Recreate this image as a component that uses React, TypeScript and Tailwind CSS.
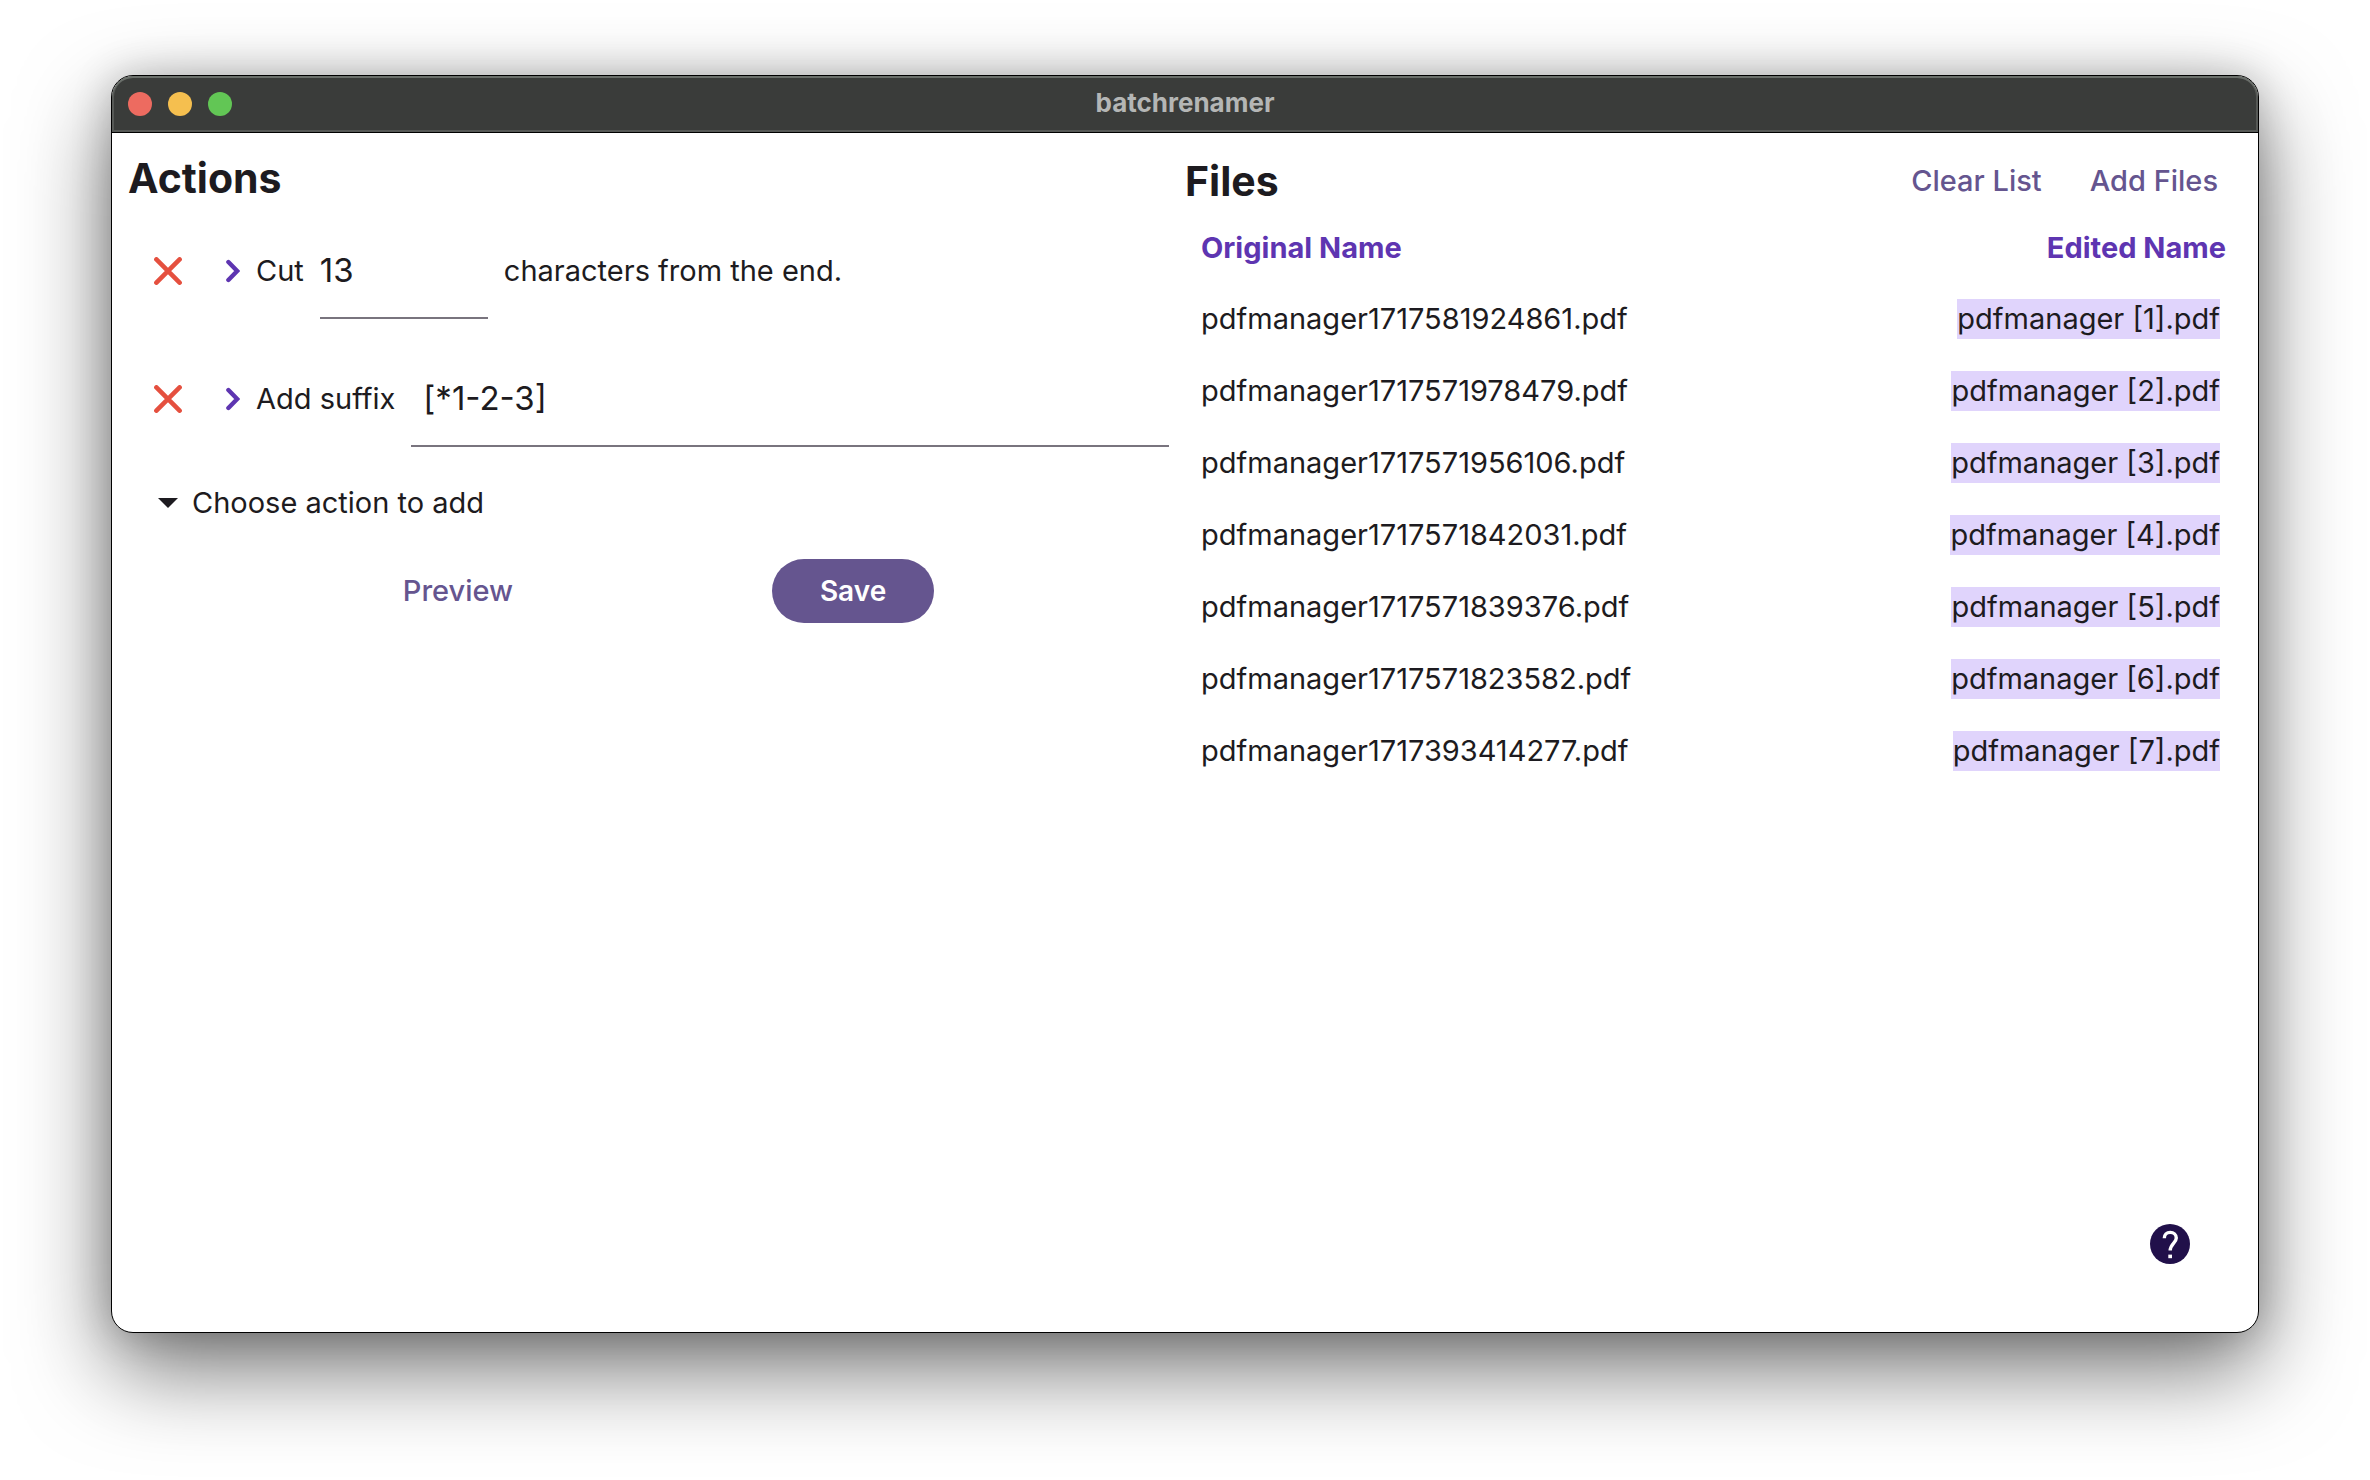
import React from "react";

const files = [
  { original: "pdfmanager1717581924861.pdf", edited: "pdfmanager [1].pdf" },
  { original: "pdfmanager1717571978479.pdf", edited: "pdfmanager [2].pdf" },
  { original: "pdfmanager1717571956106.pdf", edited: "pdfmanager [3].pdf" },
  { original: "pdfmanager1717571842031.pdf", edited: "pdfmanager [4].pdf" },
  { original: "pdfmanager1717571839376.pdf", edited: "pdfmanager [5].pdf" },
  { original: "pdfmanager1717571823582.pdf", edited: "pdfmanager [6].pdf" },
  { original: "pdfmanager1717393414277.pdf", edited: "pdfmanager [7].pdf" },
];

function TitleBar() {
  return (
    <header className="grid h-[57px] grid-cols-[1fr_auto_1fr] items-center rounded-t-[21px] border-b border-black bg-[#3a3c3a] px-4 shadow-[inset_0_2px_0_#6b706b,inset_0_0_0_2px_#565956]">
      <div className="flex gap-4">
        <button aria-label="Close" className="size-6 rounded-full bg-[#ed6b60]" />
        <button aria-label="Minimize" className="size-6 rounded-full bg-[#f5bf4f]" />
        <button aria-label="Zoom" className="size-6 rounded-full bg-[#62c655]" />
      </div>
      <h1 className="pb-0.5 text-[26px] leading-8 font-bold text-[#b4b6b5]">batchrenamer</h1>
    </header>
  );
}

function RemoveButton({ label }: { label: string }) {
  return (
    <button aria-label={label} className="mr-11 shrink-0">
      <svg viewBox="0 0 28 28" className="size-7" fill="none" stroke="#e5503f" strokeWidth="4.6" strokeLinecap="round">
        <path d="M2.4 2.4 25.6 25.6M25.6 2.4 2.4 25.6" />
      </svg>
    </button>
  );
}

function Chevron() {
  return (
    <svg viewBox="0 0 14 24" className="mr-4 h-6 w-[14px] shrink-0" fill="none" stroke="#5e35b1" strokeWidth="4.4" strokeLinecap="round" strokeLinejoin="miter">
      <path d="M2.4 3 11.2 12 2.4 21" />
    </svg>
  );
}

function Actions() {
  return (
    <section className="px-4 pt-5">
      <h2 className="text-[41px] leading-[50px] font-bold">Actions</h2>

      <div className="mt-2 flex flex-col">
        <div className="flex h-32 items-center pt-6 pb-8 pl-[26px]">
          <RemoveButton label="Remove cut action" />
          <Chevron />
          <label htmlFor="cut" className="mr-4 text-[29px]">Cut</label>
          <input
            id="cut"
            defaultValue="13"
            className="h-24 w-[168px] shrink-0 border-b-2 border-[#79747e] bg-transparent text-[33px] outline-none"
          />
          <span className="ml-4 text-[29px] whitespace-nowrap">characters from the end.</span>
        </div>
        <div className="flex h-32 items-center pt-6 pb-8 pl-[26px]">
          <RemoveButton label="Remove suffix action" />
          <Chevron />
          <label htmlFor="suffix" className="mr-4 text-[29px] whitespace-nowrap">Add suffix</label>
          <input
            id="suffix"
            defaultValue="[*1-2-3]"
            className="h-24 min-w-0 flex-1 border-b-2 border-[#79747e] bg-transparent px-3 text-[33px] outline-none"
          />
        </div>
      </div>

      <div className="mt-1 flex h-16 items-center gap-3.5 pl-[30px]">
        <svg viewBox="0 0 20 10" className="h-[10px] w-5 shrink-0" fill="#1d1b20">
          <path d="M0 0H20L10 10Z" />
        </svg>
        <select aria-label="Choose action to add" className="appearance-none bg-transparent text-[29px] outline-none">
          <option>Choose action to add</option>
        </select>
      </div>

      <div className="mt-6 flex justify-evenly pl-4">
        <button className="h-16 px-6 text-[29px] font-medium text-[#65558f]">Preview</button>
        <button className="h-16 rounded-full bg-[#65558f] px-12 text-[28px] font-semibold text-white">Save</button>
      </div>
    </section>
  );
}

function Files() {
  return (
    <section className="pt-5 pr-4">
      <div className="flex h-14 items-center justify-between">
        <h2 className="text-[41px] leading-[50px] font-bold">Files</h2>
        <div className="flex gap-12 pr-6 text-[29px] font-medium text-[#65558f]">
          <button>Clear List</button>
          <button>Add Files</button>
        </div>
      </div>

      <table className="mt-1 w-full text-[29px]">
        <thead>
          <tr className="h-[70px] font-bold text-[#5e35b1]">
            <th className="pl-4 text-left">Original Name</th>
            <th className="pr-4 text-right">Edited Name</th>
          </tr>
        </thead>
        <tbody>
          {files.map((file) => (
            <tr key={file.original} className="h-18">
              <td className="pl-4">{file.original}</td>
              <td className="pr-[22px] text-right">
                <span className="inline-block bg-[#e0d4fc] leading-10">{file.edited}</span>
              </td>
            </tr>
          ))}
        </tbody>
      </table>
    </section>
  );
}

export default function App() {
  return (
    <div className="flex min-h-screen bg-white px-[111px] pt-[75px] pb-[147px] font-['Inter',sans-serif] text-[#1d1b20]">
      <main className="flex min-w-0 flex-1 flex-col overflow-hidden rounded-[22px] border border-black bg-white shadow-[0_36px_90px_rgba(0,0,0,0.55),0_0_40px_rgba(0,0,0,0.2)]">
        <TitleBar />
        <div className="grid flex-1 grid-cols-2">
          <Actions />
          <Files />
        </div>
        <div className="flex justify-end pr-[68px] pb-[68px]">
          <button aria-label="Help" className="block">
            <svg viewBox="0 0 40 40" className="size-10">
              <circle cx="20" cy="20" r="20" fill="#21104a" />
              <path d="M14.3 14.2C14.3 10.8 16.8 8.4 20.2 8.4S26.3 10.8 26.3 14.1C26.3 18.6 20.2 20 20.2 26.6" fill="none" stroke="#fff" strokeWidth="3.4" />
              <path d="M18.3 30.6H22V34.2H18.3Z" fill="#fff" />
            </svg>
          </button>
        </div>
      </main>
    </div>
  );
}
